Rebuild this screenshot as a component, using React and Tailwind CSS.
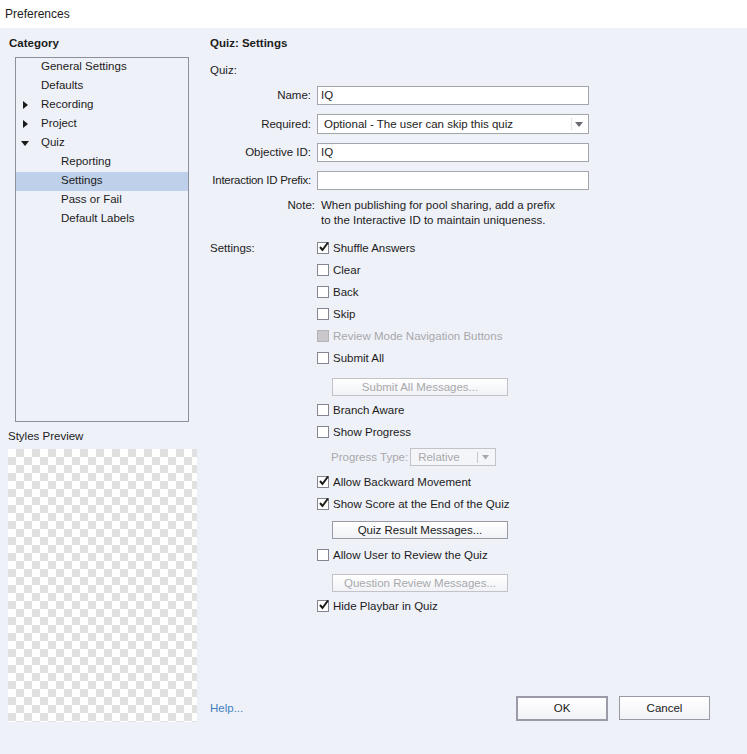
import React from "react";

const treeItems = [
  { label: "General Settings", level: 1 },
  { label: "Defaults", level: 1 },
  { label: "Recording", level: 1, arrow: "right" },
  { label: "Project", level: 1, arrow: "right" },
  { label: "Quiz", level: 1, arrow: "down" },
  { label: "Reporting", level: 2 },
  { label: "Settings", level: 2, selected: true },
  { label: "Pass or Fail", level: 2 },
  { label: "Default Labels", level: 2 },
];

function Arrow({ dir }) {
  if (dir === "down") {
    return (
      <svg width="8" height="8" viewBox="0 0 8 8" className="absolute left-[5px] top-[6px]">
        <path d="M0 1 L8 1 L4 6 Z" fill="#1a1a1a" />
      </svg>
    );
  }
  return (
    <svg width="8" height="8" viewBox="0 0 8 8" className="absolute left-[6px] top-[5px]">
      <path d="M1 0 L6 4 L1 8 Z" fill="#1a1a1a" />
    </svg>
  );
}

function Checkbox({ label, checked, disabled }) {
  return (
    <div className="flex h-[22px] items-center">
      <div
        className={
          disabled
            ? "relative h-[12px] w-[12px] border border-[#b4b4b8] bg-[#c8c8cc]"
            : "relative h-[12px] w-[12px] border border-[#85858f] bg-white"
        }
      >
        {checked && (
          <svg width="12" height="12" viewBox="0 0 12 12" className="absolute left-[0px] top-[-2px]">
            <path d="M2 6 L4.5 9 L10 1.5" fill="none" stroke="#1a1a1a" strokeWidth="2" />
          </svg>
        )}
      </div>
      <span className={disabled ? "ml-[4px] text-[#a8a8ac]" : "ml-[4px]"}>{label}</span>
    </div>
  );
}

function Button({ label, disabled, className = "" }) {
  return (
    <div
      className={
        "flex items-center justify-center border bg-gradient-to-b from-white to-[#f1f2f6] " +
        (disabled ? "border-[#c2c2c8] text-[#a8a8ac] " : "border-[#9a9aa6] text-[#1a1a1a] ") +
        className
      }
    >
      {label}
    </div>
  );
}

function FormRow({ label, tight, children }) {
  return (
    <div className="flex items-center">
      <div
        className={
          "flex w-[104px] justify-end whitespace-nowrap pr-[3px] " +
          (tight ? "tracking-[-0.25px]" : "")
        }
      >
        {label}
      </div>
      <div className="ml-[3px] w-[272px]">{children}</div>
    </div>
  );
}

export default function App() {
  return (
    <div
      className="h-[754px] w-[747px] overflow-hidden bg-[#eff1f8] text-[11.5px] leading-[15px] text-[#1c1c1c]"
      style={{ fontFamily: '"Liberation Sans", Arial, sans-serif' }}
    >
      <div className="flex h-[28px] items-center bg-white pl-[5px] text-[12px]">Preferences</div>

      <div className="flex">
        {/* left column */}
        <div className="w-[200px] shrink-0">
          <div className="pl-[9px] pt-[8px] font-bold">Category</div>
          <div className="ml-[15px] mt-[6px] h-[365px] w-[174px] border border-[#8e8f9c]">
            {treeItems.map((item) => (
              <div
                key={item.label}
                className={
                  "relative flex h-[19px] items-center pb-[2px] " +
                  (item.level === 1 ? "pl-[25px] " : "pl-[45px] ") +
                  (item.selected ? "bg-[#bfd0ea]" : "")
                }
              >
                {item.arrow && <Arrow dir={item.arrow} />}
                {item.label}
              </div>
            ))}
          </div>
          <div className="pl-[8px] pt-[7px]">Styles Preview</div>
          <div className="ml-[8px] mt-[5px] h-[273px] w-[189px] bg-[conic-gradient(#e0e0e0_25%,#ffffff_0_50%,#e0e0e0_0_75%,#ffffff_0)] bg-[length:16px_16px]" />
        </div>

        {/* right column */}
        <div className="flex-1 pl-[10px]">
          <div className="pt-[8px] font-bold">Quiz: Settings</div>
          <div className="mt-[12px]">Quiz:</div>

          <div className="mt-[8px] flex flex-col gap-[9px]">
            <FormRow label="Name:">
              <div className="flex h-[19px] items-center border border-[#a4a4ac] bg-white pl-[3px]">IQ</div>
            </FormRow>
            <FormRow label="Required:">
              <div className="relative flex h-[20px] items-center border border-[#a4a4ac] bg-white pl-[6px]">
                Optional - The user can skip this quiz
                <div className="absolute right-[16px] top-[3px] h-[12px] w-px bg-[#e4e4e8]" />
                <svg width="8" height="6" viewBox="0 0 8 6" className="absolute right-[5px] top-[7px]">
                  <path d="M0 0 L8 0 L4 5 Z" fill="#6a6a72" />
                </svg>
              </div>
            </FormRow>
            <FormRow label="Objective ID:">
              <div className="flex h-[19px] items-center border border-[#a4a4ac] bg-white pl-[3px]">IQ</div>
            </FormRow>
            <FormRow label="Interaction ID Prefix:" tight>
              <div className="h-[19px] border border-[#a4a4ac] bg-white" />
            </FormRow>
          </div>

          <div className="mt-[8px] flex">
            <div className="w-[105px] text-right">Note:</div>
            <div className="ml-[6px]">
              When publishing for pool sharing, add a prefix
              <br />
              to the Interactive ID to maintain uniqueness.
            </div>
          </div>

          <div className="mt-[9px] flex">
            <div className="flex h-[22px] w-[107px] items-center">Settings:</div>
            <div className="flex flex-col">
              <Checkbox label="Shuffle Answers" checked />
              <Checkbox label="Clear" />
              <Checkbox label="Back" />
              <Checkbox label="Skip" />
              <Checkbox label="Review Mode Navigation Buttons" disabled />
              <Checkbox label="Submit All" />
              <div className="h-[30px] pl-[15px] pt-[9px]">
                <Button label="Submit All Messages..." disabled className="h-[18px] w-[176px]" />
              </div>
              <Checkbox label="Branch Aware" />
              <Checkbox label="Show Progress" />
              <div className="flex h-[28px] items-center pl-[14px] text-[#a8a8ac]">
                <span>Progress Type:</span>
                <div className="relative ml-[2px] flex h-[18px] w-[86px] items-center border border-[#c2c2c8] bg-[#f4f5f9] pl-[7px]">
                  Relative
                  <div className="absolute right-[17px] top-[3px] h-[11px] w-px bg-[#c8c8cc]" />
                  <svg width="7" height="5" viewBox="0 0 7 5" className="absolute right-[6px] top-[6px]">
                    <path d="M0 0 L7 0 L3.5 4.5 Z" fill="#a8a8ac" />
                  </svg>
                </div>
              </div>
              <Checkbox label="Allow Backward Movement" checked />
              <Checkbox label="Show Score at the End of the Quiz" checked />
              <div className="h-[29px] pl-[15px] pt-[6px]">
                <Button label="Quiz Result Messages..." className="h-[18px] w-[176px]" />
              </div>
              <Checkbox label="Allow User to Review the Quiz" />
              <div className="h-[29px] pl-[15px] pt-[8px]">
                <Button label="Question Review Messages..." disabled className="h-[18px] w-[176px]" />
              </div>
              <Checkbox label="Hide Playbar in Quiz" checked />
            </div>
          </div>

          <div className="mt-[79px] flex items-center">
            <div className="text-[#3f7fc2]">Help...</div>
            <div className="ml-auto flex gap-[11px] pr-[37px]">
              <Button label="OK" className="h-[25px] w-[92px] border-2 border-[#9a9aa8]" />
              <Button label="Cancel" className="h-[24px] w-[91px]" />
            </div>
          </div>
        </div>
      </div>
    </div>
  );
}
